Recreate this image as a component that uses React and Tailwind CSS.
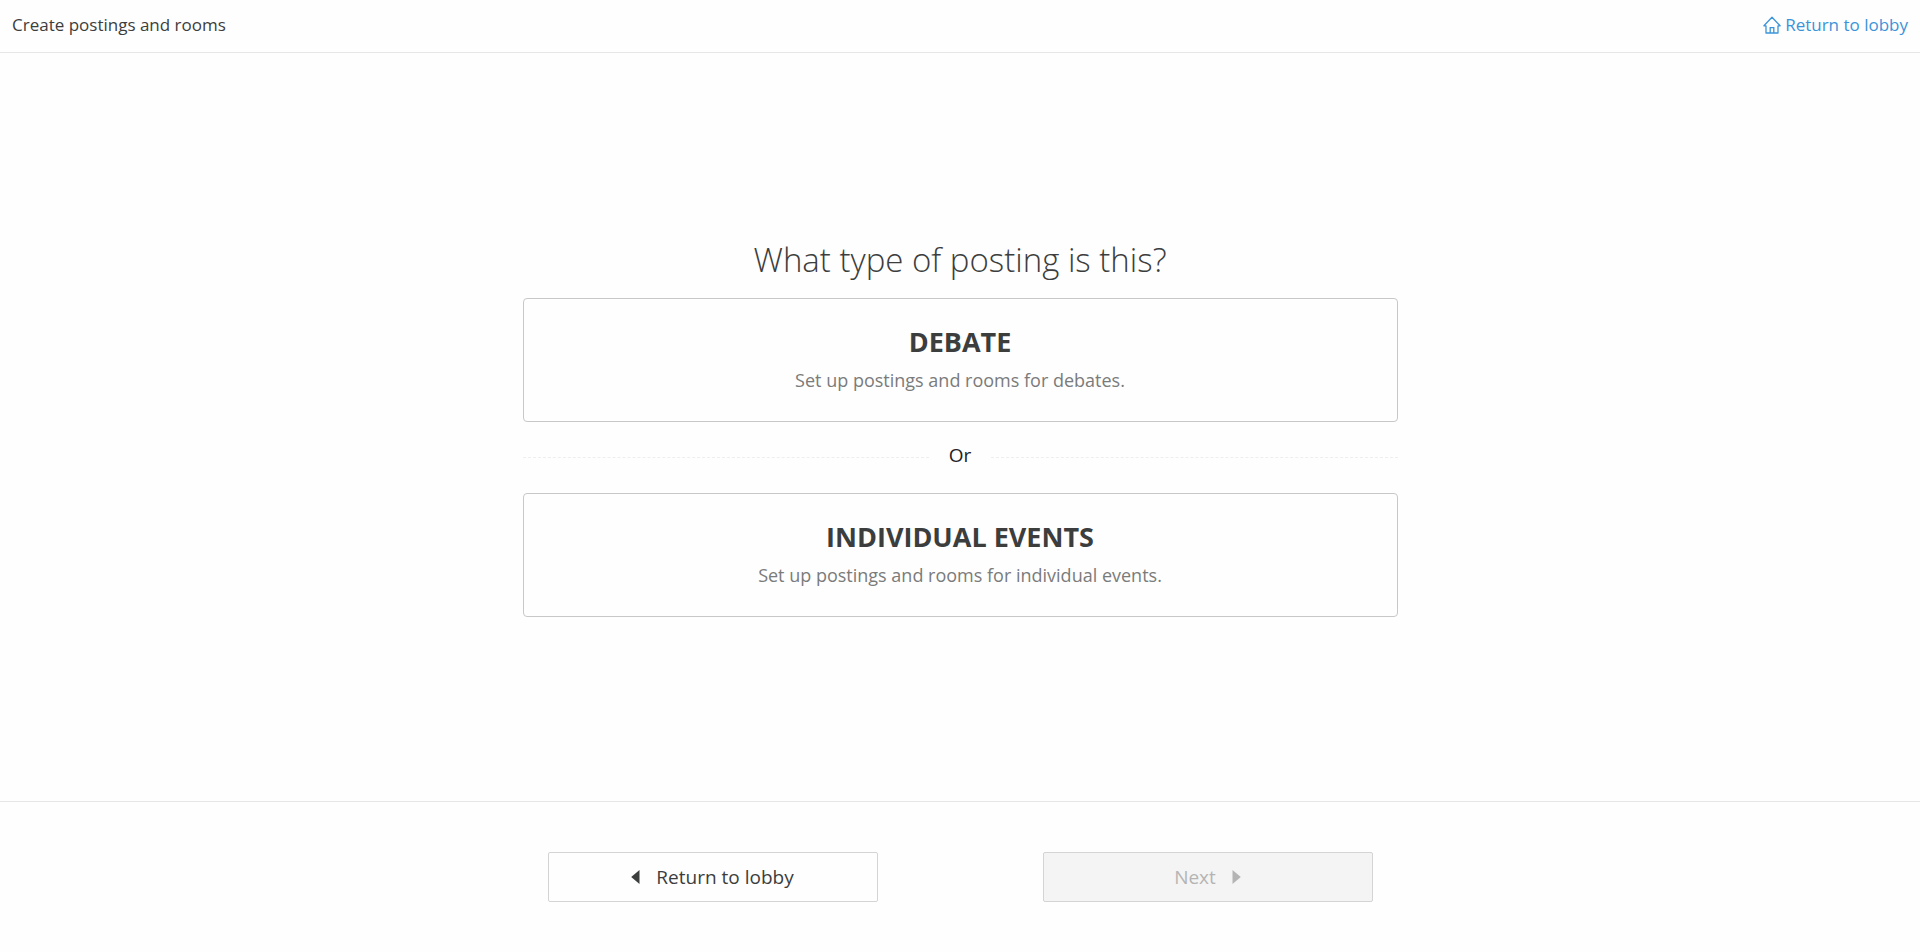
import { useState } from "react"

const POSTING_TYPES = [
  {
    id: "debate",
    title: "DEBATE",
    description: "Set up postings and rooms for debates.",
  },
  {
    id: "individual",
    title: "INDIVIDUAL EVENTS",
    description: "Set up postings and rooms for individual events.",
  },
]

export default function App() {
  const [selected, setSelected] = useState(null)

  return (
    <div className="min-h-screen flex flex-col bg-[#fefefe] text-[#3c3d3d] font-['Open_Sans',sans-serif]">
      {/* ── Header ── */}
      <header className="flex items-center justify-between px-3 pb-0.5 h-[53px] border-b border-[#e6e6e6] shrink-0">
        <h1 className="text-[17px] leading-6">Create postings and rooms</h1>
        <a href="#lobby" className="flex items-center gap-1 text-[17px] leading-6 text-[#3b94d9]">
          <HomeIcon />
          Return to lobby
        </a>
      </header>

      {/* ── Posting type ── */}
      <main className="flex-1 flex flex-col items-center justify-center px-4">
        <div className="w-full max-w-[875px]">
          <h2 className="mb-4 text-[33px] leading-[44px] font-light text-center">
            What type of posting is this?
          </h2>
          <TypeCard
            type={POSTING_TYPES[0]}
            active={selected === "debate"}
            onClick={() => setSelected("debate")}
          />
          <Divider label="Or" />
          <TypeCard
            type={POSTING_TYPES[1]}
            active={selected === "individual"}
            onClick={() => setSelected("individual")}
          />
        </div>
      </main>

      {/* ── Footer ── */}
      <footer className="border-t border-[#e6e6e6] py-[50px] px-4 shrink-0">
        <div className="mx-auto max-w-[990px] grid grid-cols-2 justify-items-center">
          <button
            type="button"
            className="w-full max-w-[330px] h-[50px] flex items-center justify-center gap-4 border border-[#d4d4d4] rounded-xs text-[19px]"
          >
            <Arrow className="rotate-180" />
            Return to lobby
          </button>
          <button
            type="button"
            disabled={!selected}
            className="w-full max-w-[330px] h-[50px] flex items-center justify-center gap-4 border border-[#d4d4d4] rounded-xs text-[19px] disabled:bg-[#f4f4f4] disabled:text-[#b4b4b4]"
          >
            Next
            <Arrow />
          </button>
        </div>
      </footer>
    </div>
  )
}

// ── Reusable sub-components ───────────────────────────────────────────────────

function TypeCard({ type, active, onClick }) {
  return (
    <button
      type="button"
      onClick={onClick}
      className={`block w-full h-[124px] border rounded text-center ${
        active ? "border-[#3b94d9]" : "border-[#c8c8c8]"
      }`}
    >
      <span className="block text-[27px] leading-9 font-bold">{type.title}</span>
      <span className="block mt-1 text-[18px] leading-8 text-[#7a7b7b]">{type.description}</span>
    </button>
  )
}

function Divider({ label }) {
  return (
    <div className="h-[71px] flex items-center gap-5 text-[19px] text-[#222222]">
      <span className="flex-1 border-t border-dashed border-[#eeeeee]" />
      <span className="pb-1 leading-8">{label}</span>
      <span className="flex-1 border-t border-dashed border-[#eeeeee]" />
    </div>
  )
}

function HomeIcon() {
  return (
    <svg width="18" height="18" viewBox="0 0 18 18" fill="none" stroke="currentColor" strokeWidth="1.3" aria-hidden="true">
      <path d="M3 9.8H0.9L9 1.2l8.1 8.6H15V17H3Z" strokeLinejoin="round" />
      <path d="M7.2 17v-5.4h3.6V17" />
    </svg>
  )
}

function Arrow({ className = "" }) {
  return (
    <svg width="9" height="14" viewBox="0 0 9 14" fill="currentColor" className={className} aria-hidden="true">
      <path d="M0.5 0v14L8.8 7Z" />
    </svg>
  )
}
